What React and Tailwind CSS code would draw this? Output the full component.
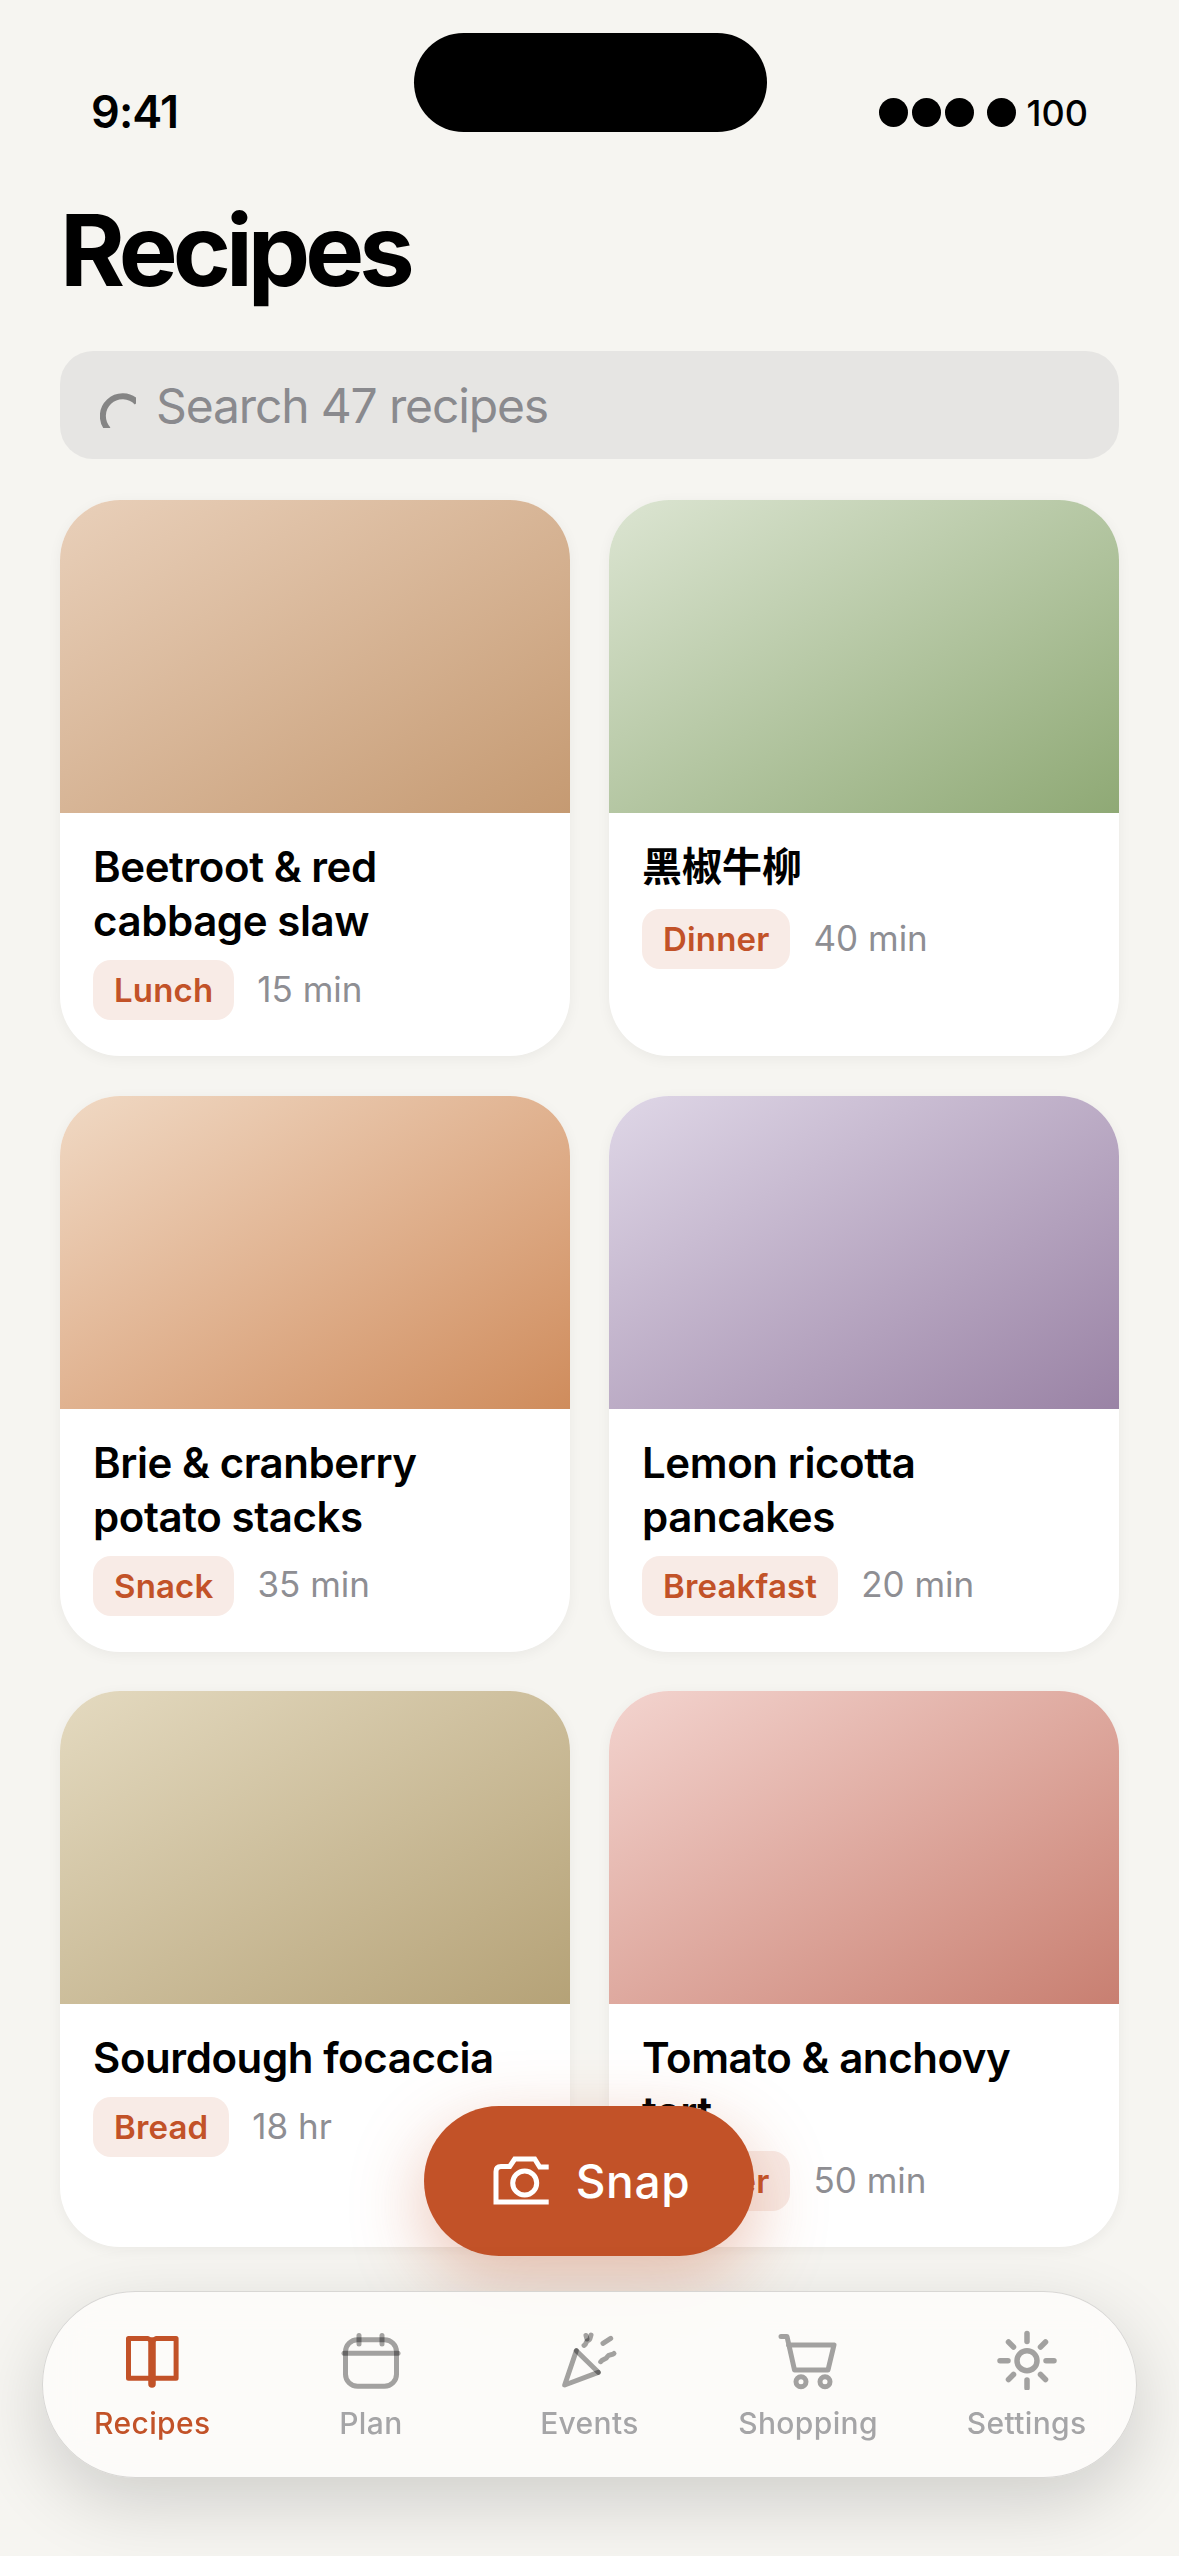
import React from "react";

const recipes = [
  { title: "Beetroot & red cabbage slaw", tag: "Lunch", time: "15 min", grad: "from-[#e9d0ba] to-[#c59a72]" },
  { title: "黑椒牛柳", cjk: true, tag: "Dinner", time: "40 min", grad: "from-[#dce5d2] to-[#8fa975]" },
  { title: "Brie & cranberry potato stacks", tag: "Snack", time: "35 min", grad: "from-[#f0d9c4] to-[#cf8c5c]" },
  { title: "Lemon ricotta pancakes", tag: "Breakfast", time: "20 min", grad: "from-[#dfd7e7] to-[#9a83a5]" },
  { title: "Sourdough focaccia", tag: "Bread", time: "18 hr", grad: "from-[#e4dac0] to-[#b5a277]" },
  { title: "Tomato & anchovy tart", tag: "Dinner", time: "50 min", grad: "from-[#f3d4cf] to-[#c87f71]" },
];

function Card({ r }) {
  return (
    <div className="bg-white rounded-[60px] overflow-hidden shadow-[0_3px_14px_rgba(0,0,0,0.05)]">
      <div className={`h-[313px] bg-gradient-to-br ${r.grad}`} />
      <div className="pt-[27px] px-[33px] pb-[36px]">
        <div className={r.cjk ? "text-[40px] leading-[54px] font-semibold text-black pb-[3px]" : "text-[42px] leading-[54px] font-semibold text-black tracking-[-0.01em]"}>{r.title}</div>
        <div className="mt-[12px] flex items-center gap-[23px]">
          <span className="h-[60px] px-[21px] pt-[2px] rounded-[18px] bg-[#f8ebe6] text-[#c25228] text-[33px] font-semibold tracking-[0.005em] flex items-center">{r.tag}</span>
          <span className="text-[35px] text-[#8e8e93] mb-[2px]">{r.time}</span>
        </div>
      </div>
    </div>
  );
}

const ink = { stroke: "#000", strokeOpacity: 0.36, strokeWidth: 5, strokeLinecap: "round", strokeLinejoin: "round", fill: "none" };

function BookIcon() {
  return (
    <svg width="60" height="60" viewBox="0 0 60 60" fill="none">
      <path d="M6.5 8.5H26L30 11L34 8.5H54.1V48.2H6.5Z" stroke="#c25228" strokeWidth="5" strokeLinejoin="round" />
      <path d="M30 11V54" stroke="#c25228" strokeWidth="7.5" strokeLinecap="round" />
    </svg>
  );
}
function CalendarIcon() {
  return (
    <svg width="60" height="60" viewBox="0 0 60 60">
      <rect x="4.5" y="9.8" width="51" height="46.4" rx="12" {...ink} />
      <path d="M3 23.3H57" {...ink} />
      <path d="M18 5.5V14" {...ink} />
      <path d="M41 5.5V14" {...ink} />
    </svg>
  );
}
function PopperIcon() {
  return (
    <svg width="60" height="60" viewBox="0 0 60 60">
      <path d="M17.3 20.7L5.7 55L39.3 42.3" {...ink} />
      <path d="M17.3 20.7L39.3 42.3" {...ink} />
      <path d="M25 15.5C28 14 26.5 11 29 10.5C31.5 10 31 7.5 32 5" {...ink} />
      <path d="M27 5.5L28 9" {...ink} />
      <path d="M44 13.3L51.7 8.3" {...ink} />
      <path d="M41.7 31.7C44 28 47 30 48.5 26.5C50 24 53 25.5 55 23.5" {...ink} />
    </svg>
  );
}
function CartIcon() {
  return (
    <svg width="60" height="60" viewBox="0 0 60 60">
      <path d="M3 6.5H9L16.5 40H50L56 15H10.5" stroke="#000" strokeOpacity="0.36" strokeWidth="5" strokeLinecap="round" strokeLinejoin="round" fill="none" />
      <circle cx="23" cy="51.7" r="5" {...ink} />
      <circle cx="47" cy="51.7" r="5" {...ink} />
    </svg>
  );
}
function SunIcon() {
  return (
    <svg width="60" height="60" viewBox="0 0 60 60">
      <g stroke="#000" strokeOpacity="0.36" strokeWidth="5.5" strokeLinecap="round" fill="none">
        <circle cx="30" cy="30.7" r="10" />
        <path d="M30 3.5V11.5" />
        <path d="M30 50V58" />
        <path d="M3 30.7H11" />
        <path d="M49 30.7H57" />
        <path d="M11.5 12L16.5 17" />
        <path d="M43.5 44.5L48.5 49.5" />
        <path d="M48.5 12L43.5 17" />
        <path d="M16.5 44.5L11.5 49.5" />
      </g>
    </svg>
  );
}
function CameraIcon() {
  return (
    <svg width="60" height="50" viewBox="0 0 60 50" fill="none" stroke="#fff" strokeWidth="5">
      <path d="M56.7 11H47.7L42.7 3H22.7L17.7 10.5H9Q4 10.5 4 15.5V46H56.7" />
      <circle cx="32.7" cy="27" r="12" />
    </svg>
  );
}

const tabs = [
  { label: "Recipes", icon: <BookIcon />, active: true },
  { label: "Plan", icon: <CalendarIcon /> },
  { label: "Events", icon: <PopperIcon /> },
  { label: "Shopping", icon: <CartIcon /> },
  { label: "Settings", icon: <SunIcon /> },
];

export default function App() {
  return (
    <div className="relative w-[1179px] h-[2556px] overflow-hidden bg-[#f6f5f1] font-['Inter','Noto_Sans_CJK_SC',sans-serif] text-black">
      <div className="absolute left-[414px] top-[33px] w-[353px] h-[99px] rounded-[50px] bg-black" />

      <div className="h-[190px] pl-[91px] pr-[91px] pt-[86px] flex justify-between items-start">
        <span className="text-[45px] leading-[52px] font-semibold tracking-[-0.02em]">9:41</span>
        <div className="flex items-center h-[52px]">
          <span className="w-[29px] h-[29px] rounded-full bg-black" />
          <span className="w-[29px] h-[29px] rounded-full bg-black ml-[4px]" />
          <span className="w-[29px] h-[29px] rounded-full bg-black ml-[4px]" />
          <span className="w-[29px] h-[29px] rounded-full bg-black ml-[13px]" />
          <span className="text-[36px] font-medium ml-[11px] mt-[1px]">100</span>
        </div>
      </div>

      <div className="px-[60px]">
        <h1 className="text-[99px] leading-[120px] font-bold tracking-[-5px]">Recipes</h1>
        <div className="mt-[41px] h-[108px] rounded-[33px] bg-[#e6e5e3] pl-[40px] flex items-center gap-[20px]">
          <svg width="36" height="36" viewBox="0 0 36 36" fill="none" className="mt-[10px]">
            <path d="M8.2 37.5A19.7 19.7 0 0 1 37 10.5" stroke="#858585" strokeWidth="6" />
          </svg>
          <span className="text-[48px] text-[#8a8a8e] tracking-[-1.15px] mt-[2px]">Search 47 recipes</span>
        </div>
        <div className="mt-[41px] grid grid-cols-2 gap-x-[39px] gap-y-[39.5px]">
          {recipes.map((r) => (
            <Card key={r.title} r={r} />
          ))}
        </div>
      </div>

      <div className="absolute left-[424px] top-[2106px] w-[330px] h-[150px] rounded-[75px] bg-[#c25228] pl-[4px] flex items-center justify-center gap-[24px] shadow-[0_24px_72px_rgba(194,82,40,0.35)] text-white">
        <CameraIcon />
        <span className="text-[46px] font-medium tracking-[0.015em]">Snap</span>
      </div>

      <div className="absolute left-[42px] top-[2291px] w-[1095px] h-[187px] rounded-[94px] bg-[#fdfcfa]/90 backdrop-blur-xl border border-black/15 shadow-[0_24px_72px_rgba(0,0,0,0.16)] flex pt-[38px]">
        {tabs.map((t) => (
          <div key={t.label} className="flex-1 flex flex-col items-center">
            {t.icon}
            <span className={`mt-[15px] text-[30px] leading-[36px] font-medium tracking-[0.012em] ${t.active ? "text-[#c25228]" : "text-[#a5a5a7]"}`}>{t.label}</span>
          </div>
        ))}
      </div>
    </div>
  );
}
